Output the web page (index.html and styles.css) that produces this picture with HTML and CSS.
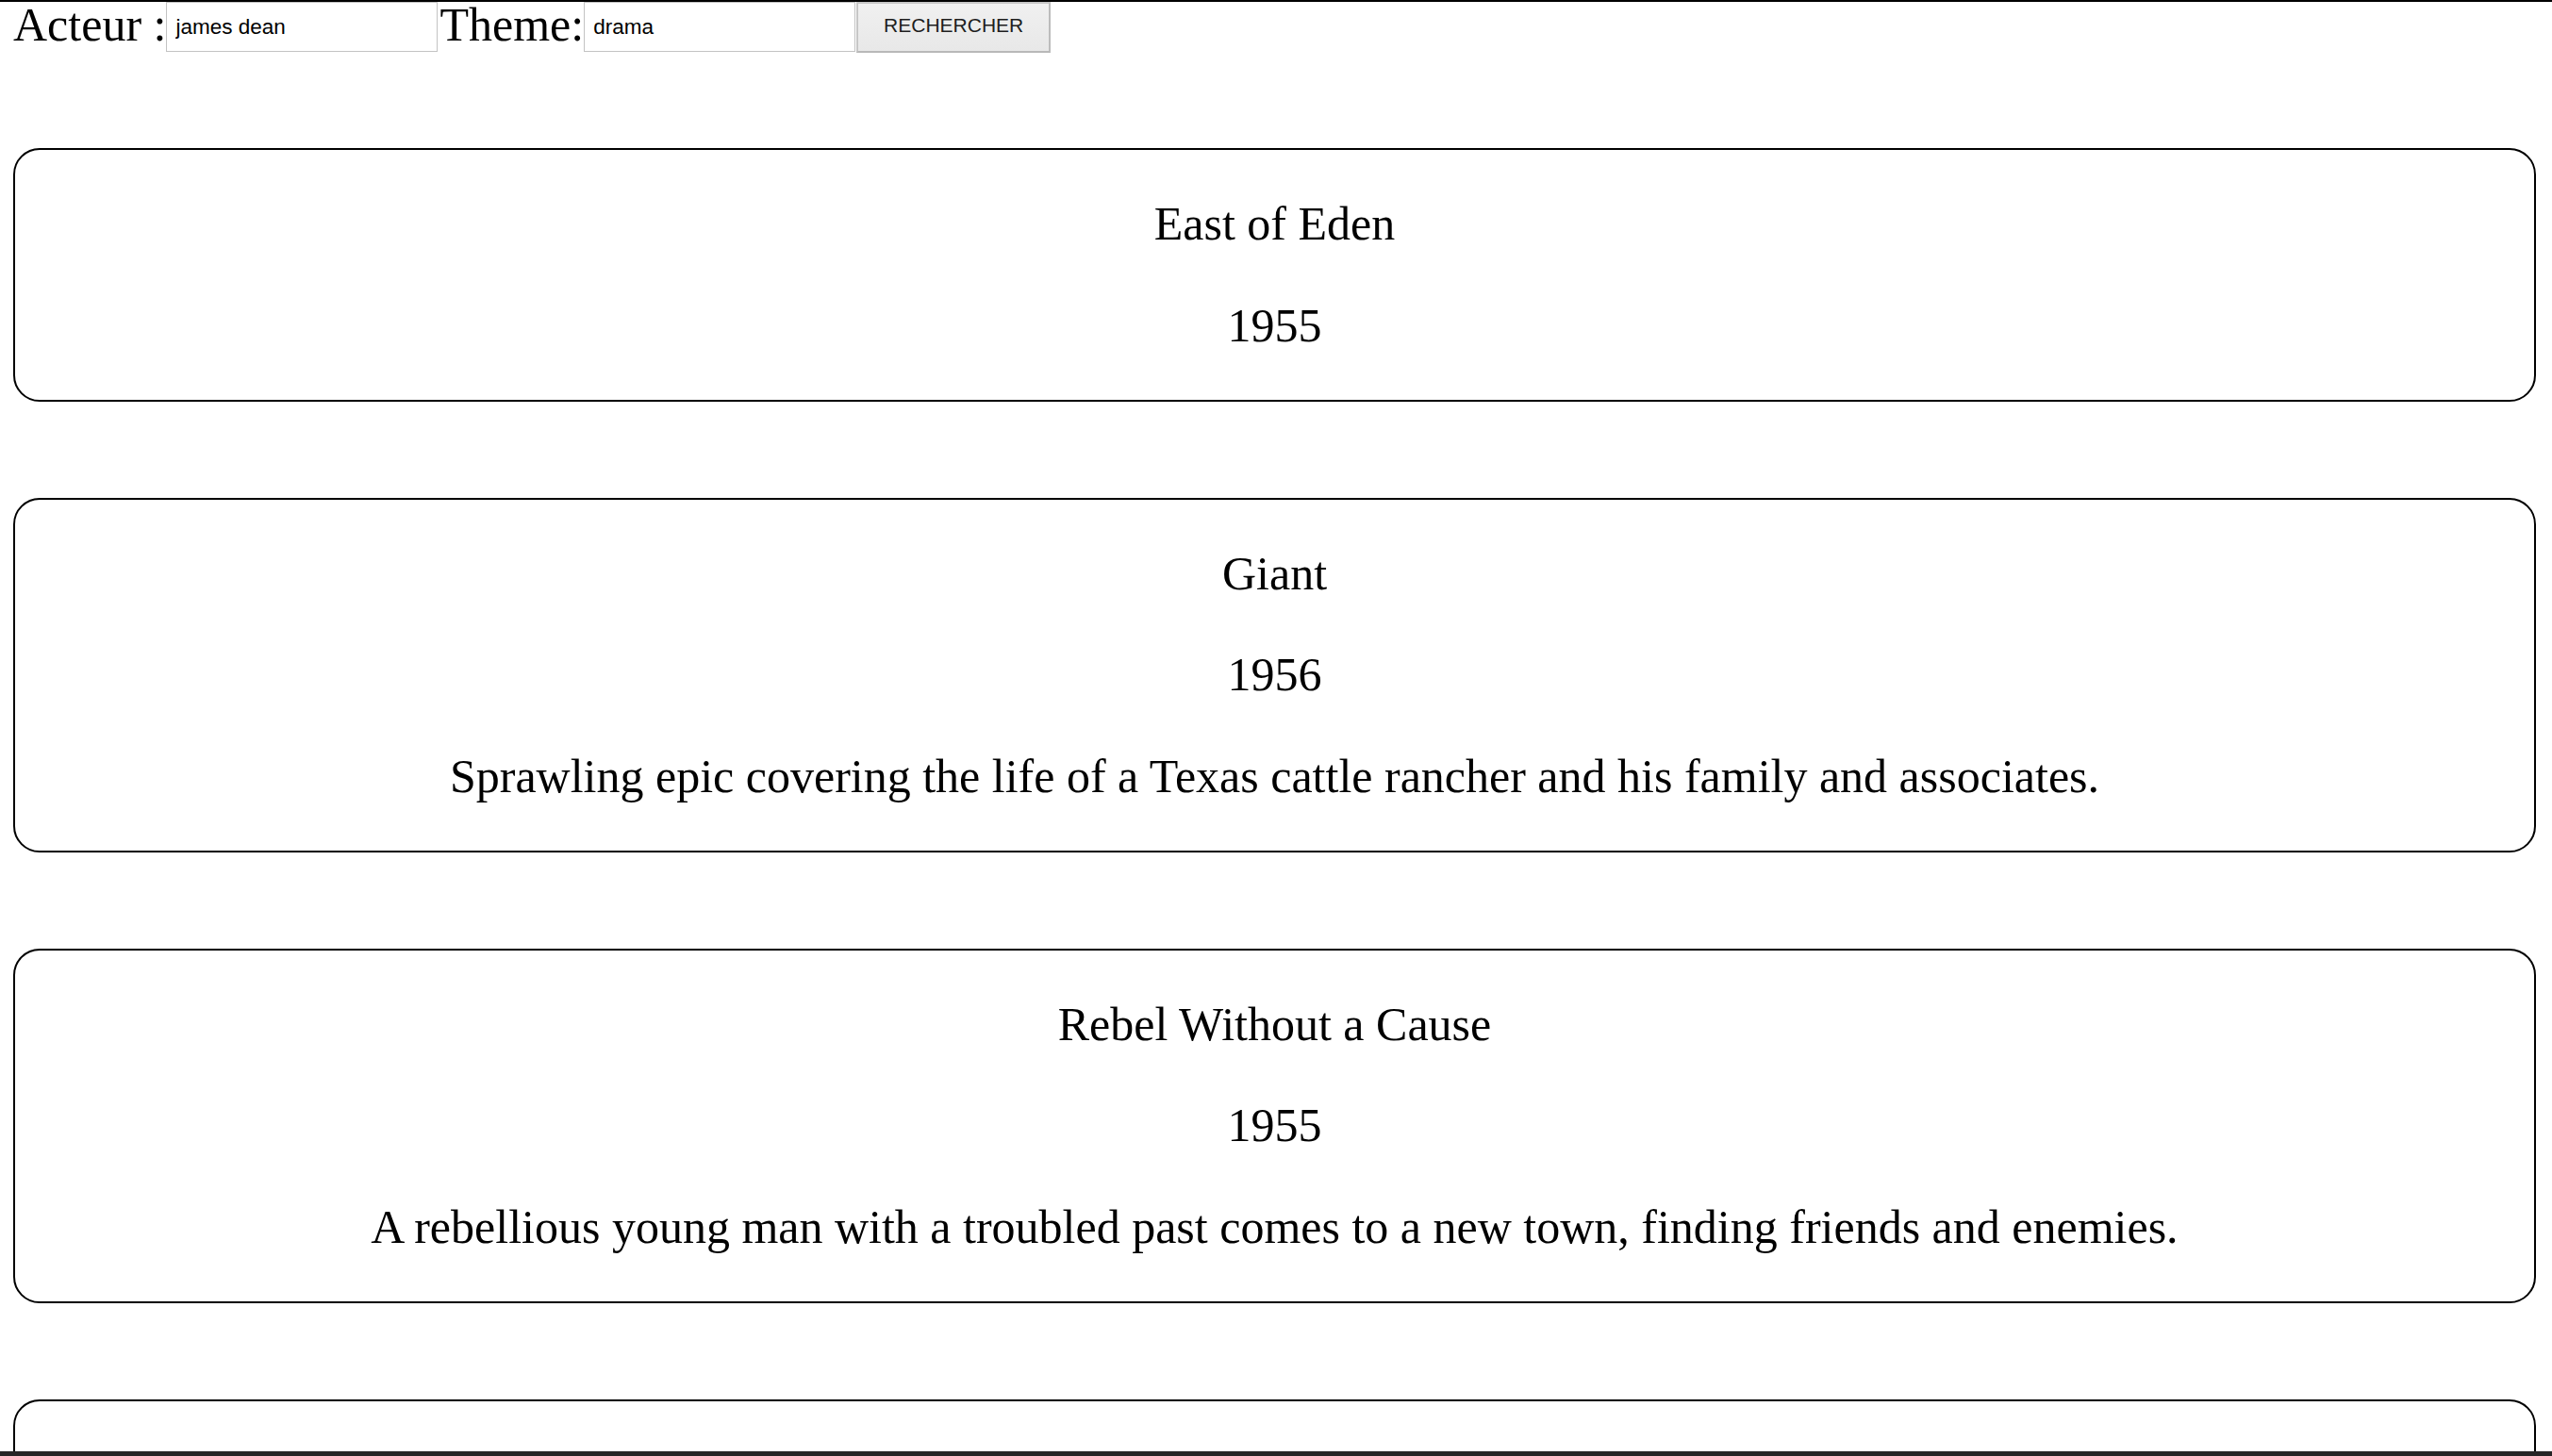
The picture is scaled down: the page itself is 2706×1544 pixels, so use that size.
FILE: index.html
```html
<!DOCTYPE html>
<html lang="fr">
<head>
<meta charset="utf-8">
<title>Films</title>
<link rel="stylesheet" href="styles.css">
</head>
<body>
<div class="topline"></div>
<form class="search">
  <label class="search-label" for="acteur">Acteur :</label>
  <input class="search-input" id="acteur" type="text" value="james dean">
  <label class="search-label search-label-second" for="theme">Theme:</label>
  <input class="search-input" id="theme" type="text" value="drama">
  <button class="search-button" type="button">RECHERCHER</button>
</form>
<main class="films">
  <section class="film">
    <p class="film-line">East of Eden</p>
    <p class="film-line">1955</p>
  </section>
  <section class="film">
    <p class="film-line">Giant</p>
    <p class="film-line">1956</p>
    <p class="film-line">Sprawling epic covering the life of a Texas cattle rancher and his family and associates.</p>
  </section>
  <section class="film">
    <p class="film-line">Rebel Without a Cause</p>
    <p class="film-line">1955</p>
    <p class="film-line">A rebellious young man with a troubled past comes to a new town, finding friends and enemies.</p>
  </section>
  <section class="film film-empty"></section>
</main>
<div class="bottombar"></div>
</body>
</html>
```

FILE: styles.css
```css
html, body {
  margin: 0;
  padding: 0;
  background: #ffffff;
}

body {
  font-family: "Liberation Serif", "Times New Roman", serif;
  color: #000000;
  padding: 0 17px 0 14px;
}

.topline {
  height: 2px;
  background: #000000;
  margin: 0 -17px 0 -14px;
}

.search {
  display: flex;
  align-items: flex-start;
  height: 54px;
  margin: 0;
}

.search-label {
  font-size: 50px;
  line-height: 48px;
  white-space: nowrap;
}

.search-label-second {
  margin-left: 2px;
}

.search-input {
  box-sizing: border-box;
  width: 288px;
  height: 53px;
  margin: 0;
  padding: 0 0 0 9px;
  border: 1px solid #c3c3c3;
  font-family: "Liberation Sans", Arial, sans-serif;
  font-size: 22.5px;
  color: #000000;
  background: #ffffff;
  outline: none;
}

.search-button {
  box-sizing: border-box;
  width: 206px;
  height: 54px;
  margin: 0 0 0 1px;
  padding: 0 0 4px 0;
  border: 2px solid #c6c6c6;
  border-bottom-color: #b8b8b8;
  border-right-color: #bcbcbc;
  background: linear-gradient(#f0f0f0, #e8e8e8);
  font-family: "Liberation Sans", Arial, sans-serif;
  font-size: 21px;
  color: #1e1e1e;
}

.films {
  display: flex;
  flex-direction: column;
  gap: 101.5px;
  margin-top: 101px;
  padding-bottom: 100px;
}

.film {
  border: 2px solid #000000;
  border-radius: 28px;
  text-align: center;
}

.film-empty {
  height: 265px;
}

.film-line {
  font-size: 50px;
  line-height: 57.5px;
  margin: 50px 0;
}

.bottombar {
  position: fixed;
  left: 0;
  right: 0;
  bottom: 0;
  height: 5px;
  background: #262626;
}
```
